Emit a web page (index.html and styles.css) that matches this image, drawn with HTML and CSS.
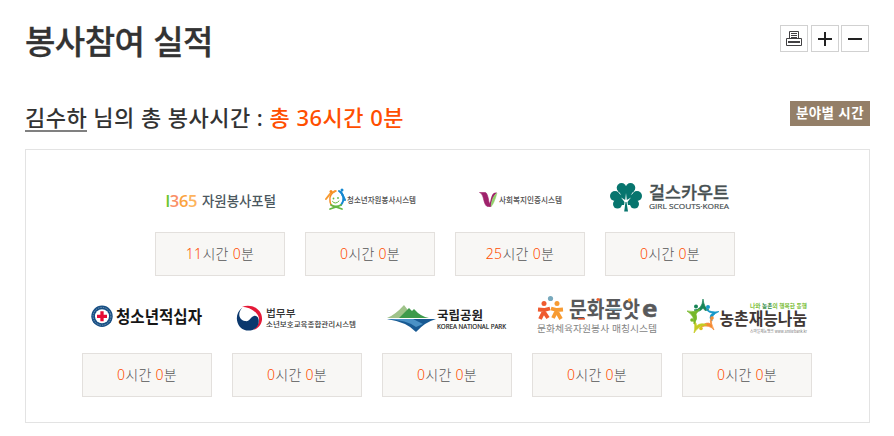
FILE: index.html
```html
<!DOCTYPE html>
<html lang="ko">
<head>
<meta charset="utf-8">
<title>봉사참여 실적</title>
<link rel="stylesheet" href="styles.css">
</head>
<body>
<main class="page">
  <header class="page-head">
    <h1>봉사참여 실적</h1>
    <div class="tools">
      <button class="tool" aria-label="인쇄"><svg width="26" height="26" viewBox="0 0 26 26" fill="none" stroke="#414042"><path d="M8.500 12.500V5.500H17.500V12.500M10 7.500H16M10 9.500H16M10 11.500H16M5.500 12.500H20.500V19.500H5.500Z"/><path d="M7 16H19" stroke-width="2"/></svg></button>
      <button class="tool" aria-label="확대"><svg width="26" height="26" viewBox="0 0 26 26" stroke="#222" stroke-width="2"><path d="M6 13H20M13 6V20"/></svg></button>
      <button class="tool" aria-label="축소"><svg width="26" height="26" viewBox="0 0 26 26" stroke="#222" stroke-width="2"><path d="M6 13H20"/></svg></button>
    </div>
  </header>

  <div class="summary">
    <h2><span class="name">김수하</span> 님의 총 봉사시간 : <strong>총 36시간 0분</strong></h2>
    <a class="badge">분야별 시간</a>
  </div>

  <section class="panel">
    <ul class="row row-first">
      <li>
        <svg class="logo" viewBox="0 0 130 50">
          <text class="latin" x="10.500" y="34.500" font-weight="600" font-size="16.500" textLength="32" lengthAdjust="spacing"><tspan fill="#6cc52c">l</tspan><tspan fill="#fa9068">3</tspan><tspan fill="#fba33d">6</tspan><tspan fill="#fdb45e">5</tspan></text>
          <text x="47" y="33.500" font-size="14" fill="#4b5860" font-weight="500" textLength="74" lengthAdjust="spacingAndGlyphs">자원봉사포털</text>
        </svg>
        <p class="time"><b>11</b>시간 <b>0</b>분</p>
      </li>
      <li>
        <svg class="logo" viewBox="0 0 130 50">
          <g fill="none" stroke-linecap="round"><path d="M31 19C27 20 24 24 25 29C25 32 27 34 28 34" stroke="#f58a20" stroke-width="1.500"/><path d="M21 27L25 22L30 19" stroke="#f79a30" stroke-width="2"/><path d="M34 19C39 22 40 28 36 33" stroke="#1688d0" stroke-width="2"/><path d="M36 20L40 28" stroke="#1688d0" stroke-width="2"/><path d="M26 33Q31 36 36 33M25 37L31 35L37 37" stroke="#65b844" stroke-width="1.800"/><path d="M27.500 29.500Q30.500 33 34 29" stroke="#65b844"/></g>
          <circle cx="26" cy="19.500" r="1.500" fill="#f58a20"/><circle cx="37" cy="18" r="1.500" fill="#1688d0"/><circle cx="28.500" cy="26.500" r=".9" fill="#65b844"/><circle cx="33" cy="26" r=".9" fill="#65b844"/>
          <text x="42" y="31" font-size="8.500" fill="#505050" font-weight="500" textLength="69" lengthAdjust="spacingAndGlyphs">청소년자원봉사시스템</text>
        </svg>
        <p class="time"><b>0</b>시간 <b>0</b>분</p>
      </li>
      <li>
        <svg class="logo" viewBox="0 0 130 50">
          <path d="M24.500 20.500H30.500Q32.500 21 34 30L36 34.500H32.500C30 34 29 29 28 25Q27 21 24.500 20.500Z" fill="#9f226c" stroke="#9f226c" stroke-width=".6"/><path d="M42 20.500C36 20 36.500 26 34 34.500H36Q37 25 42 20.500Z" fill="#9f226c"/><path d="M42 21Q37 24 36 34.500Q39 32 42 21Z" fill="#91cf6b" stroke="#91cf6b" stroke-width=".5"/>
          <text x="44" y="31" font-size="8.500" fill="#505050" font-weight="500" textLength="63" lengthAdjust="spacingAndGlyphs">사회복지인증시스템</text>
        </svg>
        <p class="time"><b>25</b>시간 <b>0</b>분</p>
      </li>
      <li>
        <svg class="logo" viewBox="0 0 130 50">
          <g fill="#07756e"><circle cx="16.500" cy="15.800" r="4.800"/><circle cx="25.500" cy="15.800" r="4.800"/><path d="M12 17H30L23 27H19Z"/><circle cx="10" cy="24" r="5"/><circle cx="12.500" cy="32" r="4.500"/><circle cx="32" cy="24" r="5"/><circle cx="29.500" cy="32" r="4.500"/><path d="M10 20L21 25L32 20V33H10Z"/></g><path d="M21 21L20.200 28L16 25.500L19.500 30L18 40H24L22.500 30L26 25.500L21.800 28Z" fill="#fff"/><path d="M20.500 30H21.500L23 39.500H19.200Z" fill="#07756e"/>
          <text x="44" y="26.500" font-size="17.500" fill="#475052" stroke="#475052" stroke-width=".3" font-weight="500" textLength="80" lengthAdjust="spacingAndGlyphs">걸스카우트</text>
          <text x="44" y="36.500" class="latin" font-size="8" fill="#475052" stroke="#475052" stroke-width=".2" textLength="80" lengthAdjust="spacingAndGlyphs">GIRL SCOUTS·KOREA</text>
        </svg>
        <p class="time"><b>0</b>시간 <b>0</b>분</p>
      </li>
    </ul>
    <ul class="row">
      <li>
        <svg class="logo" viewBox="0 0 130 50">
          <circle cx="20" cy="23.300" r="10.700" fill="#174f84"/><circle cx="20" cy="23.300" r="8.900" fill="none" stroke="#7595b4" stroke-width="1" stroke-dasharray="1.500 1"/><circle cx="20" cy="23.300" r="7" fill="#fff"/><path d="M15 23.300H25M20 18.300V28.300" stroke="#e60b34" stroke-width="3.300"/>
          <text x="34" y="29.500" font-size="17.500" font-weight="700" fill="#161616" textLength="86" lengthAdjust="spacingAndGlyphs">청소년적십자</text>
        </svg>
        <p class="time"><b>0</b>시간 <b>0</b>분</p>
      </li>
      <li>
        <svg class="logo" viewBox="0 0 130 50">
          <path d="M10 14C20 10 31 17 30 27C29 33 25 36 21 37C27 33 29 26 25 21C21 16 15 14 10 14Z" fill="#e51937"/><path d="M10.500 14.500C4 19 3 28 8 34C14 40 23 38 26 32C28 27 26 22 22 23C18 24 18 29 13 28C7 27 5 20 10.500 14.500Z" fill="#0b386d"/>
          <text x="34" y="24" font-size="10.500" font-weight="500" fill="#333" textLength="29.500" lengthAdjust="spacingAndGlyphs">법무부</text>
          <text x="34" y="34" font-size="7" fill="#333" font-weight="500" textLength="90" lengthAdjust="spacingAndGlyphs">소년보호교육종합관리시스템</text>
        </svg>
        <p class="time"><b>0</b>시간 <b>0</b>분</p>
      </li>
      <li>
        <svg class="logo" viewBox="0 0 130 50">
          <path d="M5 25Q13 22 22 12L32 25Z" fill="#9fc38a"/><path d="M17 25L27 15L30 18L32 16Q39 24 47 25Z" fill="#3e9a4b"/><path d="M5 26H54Q43 29 34 39Q25 29 5 26Z" fill="#185a93"/><path d="M5 26H31L41 31L34 34Q25 27 5 26Z" fill="#4a91c5"/>
          <text x="55" y="27" font-size="12.500" font-weight="700" fill="#222" textLength="46" lengthAdjust="spacingAndGlyphs">국립공원</text>
          <text x="55" y="35.500" class="latin" font-size="6.200" fill="#222" stroke="#222" stroke-width=".2" textLength="69" lengthAdjust="spacingAndGlyphs">KOREA NATIONAL PARK</text>
        </svg>
        <p class="time"><b>0</b>시간 <b>0</b>분</p>
      </li>
      <li>
        <svg class="logo" viewBox="0 0 130 50">
          <circle cx="18.500" cy="5.500" r="2.600" fill="#78a9bd"/><circle cx="12" cy="10.500" r="2.500" fill="#ef5a2f"/><circle cx="25" cy="10.500" r="2.500" fill="#f79b32"/>
          <g fill="none" stroke-width="3.800"><path d="M6 16.500L12 17L18 15.500M11.500 17L11 20L8 26M12 19L16 25" stroke="#ef5a2f"/><path d="M19 15.500L25 17L31 16.500M25 17L21 25M25 19L29 26" stroke="#f79b32"/></g>
          <text x="37" y="24" font-size="21.500" font-weight="700" fill="#58595b" textLength="71" lengthAdjust="spacingAndGlyphs">문화품앗</text>
          <text x="110" y="23.500" class="latin" font-size="24" font-weight="700" fill="#58595b" stroke="#58595b" stroke-width=".5" textLength="15.500" lengthAdjust="spacingAndGlyphs">e</text>
          <circle cx="66" cy="6.500" r="1.600" fill="#f0602d"/><circle cx="97.500" cy="7" r="1.800" fill="#f79b32"/><path d="M46 25.800H53" stroke="#ef5a2f" stroke-width="1.500"/><path d="M77 16.300H90" stroke="#78a9bd" stroke-width="1.500"/>
          <text x="5" y="38.800" font-size="9.500" fill="#858585" textLength="120" lengthAdjust="spacingAndGlyphs">문화체육자원봉사 매칭시스템</text>
        </svg>
        <p class="time"><b>0</b>시간 <b>0</b>분</p>
      </li>
      <li>
        <svg class="logo" viewBox="0 0 130 50">
          <g stroke-width=".7" stroke-linejoin="round"><path d="M12 17Q20 17 21 6Q22 15 27 17L23 17.500L21 15Q18 20 12 17Z" fill="#188458" stroke="#188458"/><path d="M24 16Q29 20 37 18.500Q29 22 30 28L28 25Q28 21 31 20Q26 20 24 16Z" fill="#1698c8" stroke="#1698c8"/><path d="M30 24Q28 30 32 37Q27 31 19 34Q24 28 29 31Q27 28 30 24Z" fill="#f58a32" stroke="#f58a32"/><path d="M25 32Q17 32 12 40Q14 32 11 27L14 30L14.500 33Q19 29 25 32Z" fill="#c6cb21" stroke="#c6cb21"/><path d="M12 31Q13 23 5 18Q12 20 18 16L14 21Q16 26 12 31Z" fill="#76b82a" stroke="#76b82a"/></g>
          <circle cx="14" cy="13.500" r="2" fill="#188458"/><circle cx="26" cy="14" r="2" fill="#1698c8"/><circle cx="30" cy="25" r="1.800" fill="#f58a32"/><circle cx="19" cy="35.500" r="1.800" fill="#dbbf20"/><circle cx="10" cy="27" r="1.800" fill="#76b82a"/>
          <text x="68" y="14.500" font-size="6" font-weight="700" fill="#79bd35" textLength="57" lengthAdjust="spacingAndGlyphs">나와 <tspan fill="#2c8a40">농촌</tspan>의 행복한 동행</text>
          <text x="37.500" y="31.800" font-size="17" font-weight="700" fill="#403735" textLength="87.500" lengthAdjust="spacingAndGlyphs">농촌재능나눔</text>
          <text x="68" y="39.500" font-size="4" fill="#777" textLength="57" lengthAdjust="spacingAndGlyphs">스마일재능뱅크 www.smilebank.kr</text>
        </svg>
        <p class="time"><b>0</b>시간 <b>0</b>분</p>
      </li>
    </ul>
  </section>
</main>
</body>
</html>
```

FILE: styles.css
```css
* { box-sizing: border-box; }
body { margin: 0; background: #fff; color: #333; font-family: "Noto Sans", "Noto Sans CJK KR", sans-serif; }
h1, h2, p, ul { margin: 0; padding: 0; }
.page { width: 845px; margin-left: 25px; padding-top: 16px; }
.page-head { display: flex; justify-content: space-between; height: 84px; }
h1 { font-size: 33px; line-height: 48px; font-weight: 500; letter-spacing: -.5px; font-family: "Noto Sans CJK KR", sans-serif; -webkit-text-stroke: .3px #333; }
.tools { display: flex; gap: 2px; margin: 9px 1px 0 0; }
.tool { width: 28px; height: 27px; padding: 0; border: 1px solid #d1d1d1; background: #fff; overflow: hidden; }
.tool:first-child { margin-right: 1px; }
.tool svg { display: block; }
.summary { display: flex; justify-content: space-between; height: 49px; }
h2 { font-size: 22px; line-height: 34px; font-weight: 500; letter-spacing: .47px; }
.name { display: inline-block; height: 32px; border-bottom: 2px solid #808080; }
h2 strong { font-weight: 500; color: #ff4e00; }
.badge { width: 80px; height: 25px; margin-top: 1px; background: #947f68; color: #fff; font-size: 13.5px; line-height: 25px; font-weight: 600; letter-spacing: .4px; text-align: center; white-space: nowrap; }
.panel { height: 274px; padding-top: 22px; border: 1px solid #e3e3e3; }
.row { display: flex; justify-content: center; gap: 20px; padding-right: 1px; list-style: none; }
.row-first { padding-right: 5px; margin-bottom: 17px; }
.row li { width: 130px; }
.logo { display: block; width: 130px; height: 50px; margin-bottom: 10px; font-family: "Noto Sans CJK KR", sans-serif; overflow: visible; }
.latin { font-family: "Open Sans", sans-serif; }
.time { height: 44px; border: 1px solid #e3e0dd; background: #f8f7f5; color: #555; text-align: center; font-size: 14px; line-height: 42px; font-weight: 300; letter-spacing: .3px; }
.time b { color: #ff4e00; font-weight: 300; }
```
